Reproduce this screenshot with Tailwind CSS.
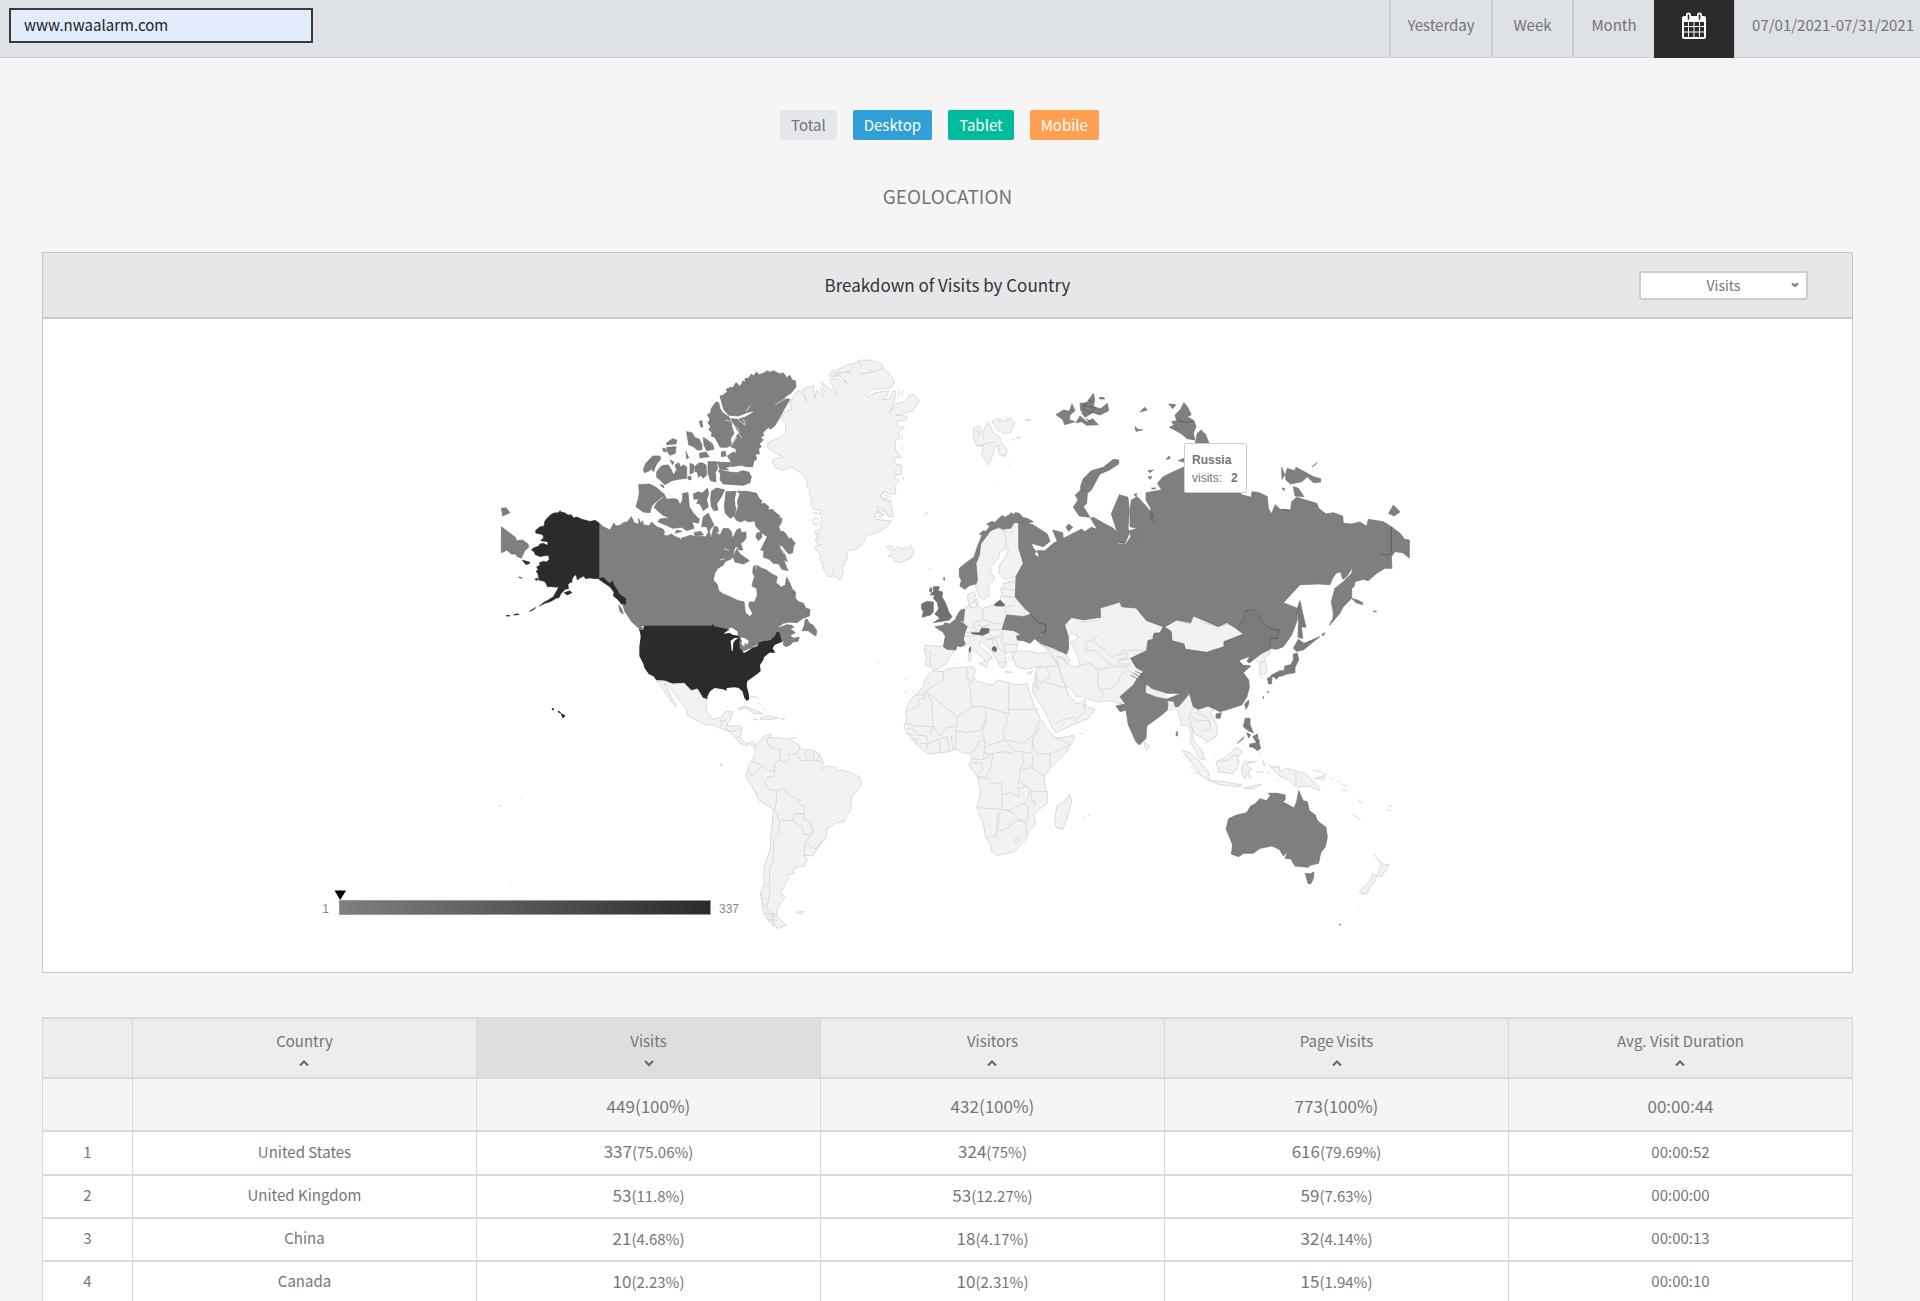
<!DOCTYPE html>
<html lang="en">
  <head>
    <meta charset="UTF-8" />
    <meta name="viewport" content="width=device-width, initial-scale=1.0" />
    <title>Geolocation - www.nwaalarm.com</title>
    <script src="https://cdn.jsdelivr.net/npm/@tailwindcss/browser@4"></script>
  </head>
  <body
    class="h-screen overflow-hidden bg-[#f5f5f5] font-['Noto_Sans_CJK_SC',sans-serif] text-[15px] text-[#757575]"
  >
    <!-- Top bar: site picker and date range -->
    <header
      class="flex h-[58px] items-stretch justify-between border-b border-[#cdd1d5] bg-[#dee1e6]"
    >
      <div class="pt-2 pl-[9px]">
        <label for="site" class="sr-only">Site</label>
        <input
          id="site"
          type="text"
          value="www.nwaalarm.com"
          class="block h-[35px] w-[304px] border-2 border-[#3a3a3a] bg-[#e3ecfd] px-[13px] pb-[3px] text-[15px] leading-[28px] text-[#222] outline-none"
        />
      </div>
      <nav class="flex leading-[49px]" aria-label="Date range">
        <button type="button" class="flex w-[102px] justify-center border-l-2 border-[#c8cbcf]">Yesterday</button>
        <button type="button" class="flex w-[81px] justify-center border-l-2 border-[#c8cbcf]">Week</button>
        <button type="button" class="flex w-[82px] justify-center border-l-2 border-[#c8cbcf]">Month</button>
        <button
          type="button"
          aria-label="Pick dates"
          class="-mb-px flex w-[80px] justify-center bg-[#2b2b2b] pt-3"
        >
          <svg class="h-[27px] w-6" viewBox="0 0 24 27" fill="none">
            <rect x="0" y="4" width="24" height="23" rx="2" fill="#fff" />
            <path d="M6.5 3v4M17.5 3v4" stroke="#fff" stroke-width="5" stroke-linecap="round" />
            <path d="M6.5 3v4M17.5 3v4" stroke="#2b2b2b" stroke-width="1.6" stroke-linecap="round" />
            <path
              d="M2 10h4v4H2zM7 10h4.500v4H7zM12.500 10H17v4h-4.500zM18 10h4v4h-4zM2 15h4v4.500H2zM7 15h4.500v4.500H7zM12.500 15H17v4.500h-4.500zM18 15h4v4.500h-4zM2 20.500h4V25H2zM7 20.500h4.500V25H7zM12.500 20.500H17V25h-4.500zM18 20.500h4V25h-4z"
              fill="#2b2b2b"
            />
          </svg>
        </button>
        <span class="flex w-[186px] justify-end border-l border-[#c8cbcf] pr-[6px]">07/01/2021-07/31/2021</span>
      </nav>
    </header>

    <main class="mr-[67px] ml-[42px]">
      <!-- Device filter -->
      <div class="flex justify-center pt-[52px] leading-[30px]">
        <button type="button" class="mr-4 rounded-[2px] bg-[#e4e7eb] px-[11px]">Total</button>
        <button type="button" class="mr-4 rounded-[2px] bg-[#2f9fd6] px-[11px] text-white">Desktop</button>
        <button type="button" class="mr-4 rounded-[2px] bg-[#00bc9c] px-[11px] text-white">Tablet</button>
        <button type="button" class="mr-4 rounded-[2px] bg-[#ffa050] px-[11px] text-white">Mobile</button>
      </div>

      <h1 class="my-10 text-center text-[19px] leading-[32px]">GEOLOCATION</h1>

      <!-- Map panel -->
      <section class="border border-[#c6c6cc] bg-white">
        <div
          class="grid h-[66px] grid-cols-3 items-center border-b-2 border-[#cbcbcf] bg-[#e7e7e9]"
        >
          <h2 class="col-start-2 text-center text-[17px] text-[#333]">Breakdown of Visits by Country</h2>
          <div class="relative mr-11 justify-self-end">
            <label for="metric" class="sr-only">Metric</label>
            <select
              id="metric"
              class="block h-[29px] w-[169px] appearance-none rounded-[3px] border-2 border-[#ccc] bg-white py-0 text-center text-[14px] leading-[25px] [text-align-last:center]"
            >
              <option>Visits</option>
              <option>Visitors</option>
              <option>Page Visits</option>
            </select>
            <svg class="pointer-events-none absolute top-[10px] right-[9px] h-2 w-2" viewBox="0 0 8 8" fill="none">
              <path d="M1 2.500 4 4.800 7 2.500" stroke="#888" stroke-width="2.600" />
            </svg>
          </div>
        </div>

        <svg
          class="block w-full font-['Liberation_Sans',sans-serif] text-[12px]"
          viewBox="43 319 1809 653"
          stroke-linejoin="round"
          role="img"
          aria-label="World map of visits"
        >
          <defs>
            <linearGradient id="scale">
              <stop offset="0" stop-color="#808080" />
              <stop offset="1" stop-color="#2b2b2b" />
            </linearGradient>
          </defs>

          <!-- Canada, Alaska -->
          <g transform="translate(490 350) scale(.33333)" stroke-width="2">
            <g fill="#7f7f7f" stroke="#707070">
              <path d="M327 519 340 530 360 540 372 520 378 528 390 526 400 518 412 516 424 500 430 512 434 520 446 522 446 506 452 520 458 512 460 524 478 528 484 516 500 530 520 538 524 548 520 554 530 558 545 552 552 558 570 566 576 580 574 564 590 560 600 556 622 560 640 558 645 562 655 548 658 540 662 566 668 545 672 530 682 530 686 545 676 545 690 556 700 535 716 536 724 545 728 566 740 540 750 535 755 548 768 545 768 565 760 575 752 580 758 600 748 600 738 588 732 600 730 620 722 628 706 634 700 645 684 655 674 670 670 690 682 704 686 722 700 732 720 740 745 752 762 755 766 788 780 800 788 790 776 768 778 756 794 756 802 735 800 715 786 708 790 690 794 680 788 668 790 650 800 645 815 655 826 658 846 672 862 680 858 698 874 712 886 705 890 682 900 700 906 716 916 726 916 745 926 755 940 760 948 775 960 778 958 798 940 805 920 818 900 816 880 820 862 832 870 832 890 824 905 826 912 832 900 836 916 848 900 856 910 865 928 862 924 874 908 876 902 884 888 890 880 884 882 872 874 876 866 850 860 846 850 862 846 868 812 872 800 890 760 910 740 880 668 828 450 828 462 838 450 838 425 815 415 800 405 785 400 770 398 762 386 745 372 726 350 700 327 686z" />
              <path d="M946 808 942 830 936 842 955 842 968 852 978 858 980 842 970 826 958 820 952 808z" />
              <path d="M740 424 770 424 800 430 806 444 816 452 812 462 824 460 836 470 834 480 846 478 862 492 870 498 866 506 876 504 874 518 866 530 872 545 880 544 888 552 896 566 904 564 910 574 916 580 910 590 908 608 896 612 884 598 876 586 870 590 884 612 892 636 880 628 894 662 876 658 866 642 850 640 838 628 820 622 822 602 812 600 828 568 832 560 820 552 798 530 794 512 776 516 765 510 752 516 738 510 734 500 745 470 742 455 750 430z" />
              <path d="M708 425 738 424 733 450 738 475 733 498 720 505 706 490 703 470z" />
              <path d="M740 596 750 612 778 632 760 642 735 636 730 622z" />
              <path d="M800 550 814 545 816 560 806 572 798 562z" />
              <path d="M664 424 680 414 704 420 694 440 680 462 684 480 672 482 664 470 662 448z" />
              <path d="M610 432 625 425 636 430 652 415 656 430 650 450 655 470 640 482 630 462 620 460 626 446 612 448z" />
              <path d="M640 500 655 490 662 505 672 525 655 545 650 530 635 530z" />
              <path d="M522 432 500 460 492 472 505 484 518 495 534 502 508 508 505 516 525 524 548 535 575 532 590 542 612 535 606 515 625 520 628 508 610 490 598 470 594 428 578 430 578 450 570 464 562 448 548 446 530 448z" />
              <path d="M446 404 478 402 498 412 522 432 505 452 485 468 480 488 460 486 438 470 444 450 448 430z" />
              <path d="M700 362 718 366 740 368 758 362 776 366 784 380 780 398 760 406 700 402 690 390 692 372 684 360z" />
              <path d="M614 350 625 340 636 338 648 345 650 375 640 385 632 376 626 382 622 366 615 365z" />
              <path d="M654 335 680 335 682 355 676 368 678 396 662 392 654 370z" />
              <path d="M500 366 512 350 520 346 535 345 544 360 550 375 560 360 555 345 566 338 572 352 580 345 590 350 590 385 566 388 545 392 525 404 508 388 500 382z" />
              <path d="M460 360 466 342 488 318 510 318 512 328 500 342 490 365 484 356 478 362 464 368z" />
              <path d="M530 278 548 266 560 270 558 282 530 284zM530 292 558 290 556 310 540 316 530 302zM518 294l8 2 2 10-8-2zM590 245 606 248 614 262 628 268 636 285 635 300 622 300 610 290 596 284zM640 262 655 272 668 282 672 298 650 302 642 285zM628 214 636 212 638 232 632 230z" />
              <path d="M588 304l8 20-6 2zM600 340 612 345 610 368 600 372zM594 380l8-2 2 10-8 2zM628 310l20-4 10 14-28 4zM694 306l12-2 2 14-14 2zM682 336 714 338 722 350 706 352 716 360 690 358zM540 330l12 6-4 8zM510 404l10 2 2 8zM612 548l20-4 8 10-24 4zM560 540l16 4-20 6z" />
              <path d="M664 175 678 156 686 158 690 176 700 190 718 202 724 215 726 232 732 250 722 266 724 284 712 292 692 292 680 272 674 262 664 258 666 248 656 238 662 230 654 218 660 208 652 195 662 188z" />
              <path d="M690 138 700 136 712 124 708 118 722 112 728 114 738 98 744 102 746 110 756 102 758 92 764 98 766 86 776 84 784 72 790 78 800 66 806 74 820 70 832 62 838 68 850 62 862 68 870 72 878 68 888 78 886 86 900 76 906 90 916 92 918 110 904 128 880 145 900 148 884 175 868 205 854 228 840 238 836 232 826 240 818 250 822 256 812 262 820 270 808 282 814 290 806 296 808 312 796 312 800 328 792 332 788 350 770 350 750 346 726 350 714 338 724 336 712 318 730 306 738 310 738 296 722 290 738 262 746 248 730 220 724 206 745 208 768 200 788 188 792 182 770 188 745 198 716 196 702 180 696 160z" />
              <path d="M386 765 394 775 400 792 390 785z" />
              <!-- eastern tip of Russia past the date line -->
              <path d="M34 530 76 562 80 572 98 570 114 582 116 592 104 602 94 625 82 620 76 612 64 612 50 600 42 605 34 608zM34 475 48 473 60 488 38 498z" />
              <path fill="none" d="M800 66l6 20M838 62l4 14M862 68l-8 16M888 78l-12 12M764 86l14 18M722 112l16 12M808 282l-18-6M818 250l-16 4M700 130l16 10M656 220l14-6M664 258l14-6M690 292l-4-16M862 492l-16 8M888 552l-18 2M836 470l-12 12M812 462l-18-4M916 726l-14 4M948 775l-18 2M700 600l14 6M372 520l2 14" />
              <!-- fjords -->
              <path fill="none" stroke="#fff" d="M896 140l-40 24M745 208l20 18M730 226l14 10 2 16 10 12M740 262l-16 24M782 166l-14 18M760 208l6 16M706 210l16 4M756 346l2 10M500 500l34 4M520 440l-30 24M690 630l14-4M702 596l16 6M868 586l14 26M740 440l-4 30M752 516l14 30M568 432l4 20M800 640l-2 18" />
            </g>
            <g fill="#2b2b2b" stroke="#2b2b2b" stroke-width="1.500">
              <path d="M327 519 316 511 300 514 276 508 262 501 250 503 244 494 234 495 224 488 214 486 210 482 204 488 192 489 182 494 172 504 164 514 162 528 150 530 136 542 138 550 146 551 154 553 160 557 160 564 152 572 170 575 174 577 172 586 160 580 150 582 146 588 130 594 124 600 132 605 136 614 150 620 160 618 174 616 176 620 178 627 170 636 160 634 148 638 150 646 140 650 144 660 138 664 144 672 146 690 162 694 168 700 172 710 186 710 198 712 206 710 200 722 190 740 178 748 160 758 148 768 166 760 184 754 200 744 206 744 214 730 226 718 236 716 234 704 242 696 246 698 246 690 250 680 258 674 262 690 270 684 282 678 286 686 300 684 312 686 327 686 340 682 350 692 358 700 368 694 372 706 382 720 386 730 396 738 408 746 406 764 398 760 394 764 390 756 384 750 378 744 370 738 372 726 362 712 350 704 338 696 327 688z" />
              <path d="M118 784 138 772 130 780zM48 796 58 796 60 798 52 799zM70 795 80 791 88 793 80 795zM96 630 118 636 120 640 108 644zM86 681 92 682 96 686zM134 688 142 684 142 692zM222 728 240 722 246 728 232 735z" />
            </g>
          </g>

          <!-- Americas south of Canada -->
          <g transform="translate(480 600) scale(.33333)" stroke-width="3">
            <path fill="#2b2b2b" d="M492 77 696 77 698 72 703 79 745 88 738 94 730 102 750 98 772 108 780 112 778 130 780 145 790 157 812 148 832 138 838 126 850 122 872 120 884 108 890 95 898 97 906 125 884 135 878 145 886 158 868 158 852 172 850 180 840 195 842 214 832 222 802 243 800 258 806 280 808 298 800 303 792 292 788 275 776 264 764 262 740 264 740 272 728 268 704 264 690 274 682 290 682 298 668 294 660 280 652 267 634 272 612 250 578 252 554 243 530 242 522 230 506 222 494 205 490 192 484 180 478 168 478 140 482 110 480 96 476 88 490 90z" />
            <path fill="#2b2b2b" stroke="#2b2b2b" d="M234 333 242 338 236 337zM243 341 255 347 248 354 246 346zM216 326 222 327 218 330z" />
            <path fill="#fff" d="M730 101 748 91 746 84 756 83 772 94 774 106 760 105 748 98zM755 152 752 122 764 114 776 114 766 120 760 128 758 153zM780 112 794 114 806 122 802 134 794 128 793 140 784 132 786 122zM788 155 812 145 808 150 792 159zM814 140 836 134 830 139z" />
            <g fill="#f2f2f2" stroke="#d9d9d9">
              <path d="M530 242 554 243 578 252 612 250 634 272 652 267 660 280 668 294 680 298 678 330 698 358 724 352 735 335 758 335 750 360 742 372 745 378 780 378 786 384 780 412 784 420 800 432 815 424 830 434 822 440 806 430 800 438 780 430 765 412 750 395 722 385 700 374 676 374 622 346 618 325 590 290 570 262 552 250 590 318 584 318 560 285 548 265z" />
              <path d="M772 328 795 318 830 332 848 342 820 340 800 325zM838 356 860 346 895 354 880 358 845 358zM820 357 834 359 824 360zM902 356 914 357 904 358z" />
              <path d="M830 434 850 410 874 402 870 415 885 412 935 420 950 430 965 448 1000 450 1020 465 1030 488 1024 508 1040 497 1068 503 1072 516 1080 510 1105 515 1140 532 1145 550 1136 568 1115 588 1112 628 1092 665 1070 668 1040 686 1040 712 1010 748 998 768 972 766 982 780 975 798 942 804 940 822 918 824 928 836 915 850 912 862 900 876 915 890 892 925 888 945 918 976 895 986 870 968 850 935 842 880 852 850 852 800 870 750 880 628 838 602 820 565 798 530 806 495 818 480 826 460 824 445z" />
              <path d="M948 936 972 935 962 944zM722 490 728 498 722 498z" />
              <g fill="none">
                <path d="M718 386 725 372 722 362 738 362M742 372 735 388 755 395 785 384M765 412 782 412M810 290l18 0 2 8M836 306l6 8M848 322l10 10M925 414l24 0M948 384l2 3M1190 186l6 0M55 618l12-3M120 594l4 1M91 852l1 3" />
                <path d="M874 402 860 420 868 440 900 450 900 480 885 490 884 515M900 480 915 488 930 478 925 465 950 460 962 482 1000 480 1025 485M950 430 960 440 955 460M985 452 972 462 982 476M1000 452 1002 478M1018 460 1012 480M815 483 845 495 840 506 815 528 806 512M845 495 865 512 884 512 882 528 862 532 854 548 866 568 888 572 890 600 885 628M888 572 915 565 920 580 955 598 958 614 972 618 972 640 944 642 938 662 908 660 900 668 885 628M944 642 972 642 975 660 988 662 1000 690 990 704 968 702 970 686 938 662M1002 692 975 730 1008 748M975 730 972 766M900 668 895 700 882 720 878 785 868 808 870 870 860 930 888 945M852 850 868 862M845 900 862 896M846 920 862 914M850 940 890 944M858 955 892 962M880 945 880 980M848 880l-8 4 10 10M852 908l-6 8 12 10M862 936l10 14 14 2M868 958l20 16M1008 748 1024 724" />
              </g>
            </g>
          </g>

          <!-- Greenland, Iceland, Svalbard -->
          <g transform="translate(760 350) scale(.33333)" fill="#f2f2f2" stroke="#d9d9d9" stroke-width="3">
            <path d="M106 128 122 122 142 156 128 118 160 106 164 146 170 120 192 142 180 112 196 128 184 96 232 136 208 88 232 86 262 100 240 78 205 78 215 65 240 56 262 44 285 40 295 31 330 30 365 42 370 56 388 72 404 95 396 110 380 116 340 117 318 136 322 142 345 128 386 122 380 140 366 150 388 148 398 124 406 124 404 156 386 192 410 160 436 155 450 134 464 134 478 152 458 182 430 190 408 196 440 198 440 210 412 212 412 230 434 232 416 246 418 266 406 268 405 300 415 310 425 322 400 325 408 342 424 346 426 372 402 378 418 392 404 408 408 430 390 434 372 424 360 438 378 448 392 460 400 500 384 500 376 480 350 470 362 488 345 492 348 508 385 512 396 512 380 532 346 550 320 556 310 580 290 596 265 602 260 616 262 630 252 634 254 646 246 650 250 664 246 680 238 690 230 680 220 678 205 680 198 668 190 656 188 640 180 630 182 616 174 605 164 595 174 584 166 570 172 556 164 545 186 535 178 524 188 510 180 496 184 480 160 478 150 458 156 446 148 436 150 420 140 408 142 396 126 370 92 350 68 362 46 352 36 330 70 320 40 308 22 290 24 278 60 262 78 246 76 218 62 206 78 180 94 180 90 160z" />
            <path d="M380 590 396 588 400 604 412 590 430 598 434 590 440 598 452 584 456 596 462 605 452 625 420 638 400 632 402 622 384 618 396 608z" />
            <path d="M642 232 660 228 668 250 682 216 694 235 700 250 720 262 722 275 742 300 735 320 716 312 715 285 704 290 700 312 686 345 664 312 672 288 650 288 640 260zM696 215 712 206 735 214 752 204 764 218 752 248 732 250 712 240 704 226zM794 212 804 206 812 210zM770 262 782 262 772 266z" />
            <path fill="none" d="M370 56 340 66 300 72M285 40 270 62 230 70M340 66 320 56M262 100 250 84M220 72 250 66 276 70M214 82 244 72M296 34 306 52M650 288 700 276M668 250 672 270M648 240l12 10-8 14M716 206l4 14M740 212l-2-12M416 140l2-20M426 136l4-16M428 256l-2 14M426 290l2 14M430 380l0 12M412 302l-10-4M410 360l-8 6 10 10M156 510l16-8 6 10-14 12zM158 488l20 2M158 520l16 8M164 555l20-6M164 570l20-10M168 590l18-8M376 450l-14-6M366 430l20 10-14 10 22 4M388 440l6 16M360 480l18 6M350 484l24 10M352 500l22-8M355 506l14-10M758 264l2 8M746 346l4-6M704 404l0 5M494 494l10-6M508 655l4 5M220 668l2-16M182 640l12-4" />
          </g>

          <!-- Europe, Middle East, Africa -->
          <g transform="translate(890 480) scale(.33333)" fill="#f2f2f2" stroke="#d9d9d9" stroke-width="3">
            <path d="M262 300 258 250 268 225 272 192 290 168 302 152 322 144 342 150 350 185 348 205 330 215 326 235 302 258 302 282 314 288 312 300 296 320 298 345 280 360 268 350 256 315z" />
            <path d="M342 150 364 160 372 128 386 128 386 158 390 200 400 250 378 290 345 298 328 282 328 258 350 225 356 210 345 205 350 185z" />
            <path d="M232 345 250 335 256 345 250 370 236 376zM252 360 264 358 262 378z" />
            <path d="M218 390 235 378 248 382 262 376 276 386 310 375 342 378 330 355 335 345 332 325 350 306 380 298 374 345 406 378 404 408 350 405 338 446 375 452 385 480 378 515 345 520 348 536 350 552 340 565 328 558 322 540 308 520 296 505 280 490 268 482 270 500 300 525 308 535 296 540 290 562 268 550 286 546 280 535 258 518 240 500 232 492 222 500 220 470 224 440 220 420z" />
            <path d="M105 496 160 500 196 510 180 528 168 552 150 562 135 572 124 560 106 556 110 530 104 515z" />
            <path d="M368 518 395 512 420 515 445 520 480 516 500 528 505 558 470 562 440 560 410 568 378 560 372 540z" />
            <path d="M450 492 480 508 525 520 540 540 530 560 500 545 482 518z" />
            <path d="M440 562 505 558 515 590 528 624 540 652 558 668 570 670 584 656 586 678 614 688 596 715 540 738 498 758 488 745 462 690 430 640 426 625 432 605 436 590z" />
            <path d="M524 432 540 414 570 415 578 425 630 420 626 410 634 384 690 366 700 384 736 378 768 420 815 434 800 455 772 485 768 508 724 535 735 560 760 585 730 620 700 640 696 672 660 662 622 665 596 658 580 648 562 652 545 628 530 620 515 590 505 555 500 528 520 532 530 552 552 560 570 560 564 530 550 500 538 488 560 478 566 468 545 462 534 472 522 440z" />
            <path d="M126 572 160 575 175 565 250 560 256 575 250 590 262 605 310 616 320 600 345 605 378 614 412 612 416 630 434 680 450 715 470 745 492 770 500 775 552 766 552 778 530 815 480 865 462 890 466 925 472 935 472 970 432 1000 436 1035 416 1050 410 1075 372 1116 320 1127 306 1115 302 1095 286 1068 280 1030 260 985 272 935 262 890 236 855 246 838 240 820 220 820 200 808 172 816 115 822 80 795 62 770 46 750 42 740 50 718 46 695 62 660 76 645 100 620 104 598z" />
            <path d="M538 942 545 965 530 1020 518 1048 498 1042 494 1015 502 975 522 965z" />
            <path d="M236 522 244 520 242 542 234 540zM345 574 366 577 346 577zM412 580 428 572 422 582z" />
            <g fill="none">
              <path d="M108 512 122 516 118 545 122 558M276 386 282 418 250 428 252 444 270 452M282 418 315 432 342 428M345 380 348 404M262 436 285 440 300 432M224 458 262 455M300 450 340 448 330 468 305 472 296 458M335 455 340 470 330 480M342 492 380 495M318 470 322 500 345 520M222 470 240 470 262 462 290 475 318 476M335 325 374 332M335 348 376 352M345 380 372 378M285 480 310 478 308 492M322 500 310 520M330 480 345 492 344 520M338 310 374 308M240 380 246 384M325 545 345 548M355 530 362 545M364 524 368 540" />
              <path d="M470 562 480 590 460 605 440 600M440 604 442 625 460 605 528 624M430 640 448 625M495 730 520 718 552 712 562 728M560 715 585 695 580 672M440 580 436 625M480 516 505 558M500 530 530 540" />
              <path d="M588 520 588 488 605 480 630 500 645 510 665 532 700 512 768 510M570 555 600 550 625 570 665 560 705 560 720 556M588 512 612 510 650 545 670 556M625 570 622 612 630 628 665 626 685 610 690 590 705 568M630 628 640 645 628 660M682 528 710 518 712 532 685 540 682 552 724 552M605 480 625 466M705 560 720 575 735 590M690 540 724 535M508 550 515 560" />
              <path d="M160 575 160 600 108 632 102 645 76 645M108 632 186 698 202 710 246 680 240 625 230 590 232 562M104 640 104 655 84 658 84 680 48 694M108 632 125 665 130 740 74 738 50 730M130 740 150 768 172 742 200 740 202 710M198 752 230 758 272 750 288 715 285 680 246 680M200 740 198 752 196 808M285 680 356 702 356 612M232 590 246 612 250 590M356 688 444 688M290 720 276 755 285 785 272 780 252 812 240 820M350 705 350 735 338 750 345 780 400 790 430 765 450 720M285 800 345 780 370 812 425 820 430 765M282 800 285 820 300 825 310 820 340 815 370 820M310 820 300 870 290 888 262 890M395 825 402 850 390 870 388 905 382 912M285 785 285 800 280 838 246 838M280 838 300 830M246 850 275 848 278 870 262 885M262 895 300 895 302 912 334 908 336 945 336 985M260 983 360 990 400 970M336 945 358 938 385 950 385 925 412 918 420 935 412 960 400 970M450 740 425 785 440 820 480 822 540 795 510 778 492 770M430 825 425 862 462 888M480 822 480 862M392 870 425 862M390 905 430 935 470 935M425 932 425 960 436 978 432 960M360 990 385 1018 412 1022 416 980 400 970M330 992 322 1055 345 1048 385 1020M322 1000 320 1070 290 1070M345 990 372 1000M385 1020 408 1030 408 1060 412 1055M372 1080 384 1072 390 1080 378 1090z" />
              <path d="M80 765 108 768 115 790 108 810M115 790 148 778 150 818M148 778 172 770 178 814M184 768 188 808M50 745 75 750 80 765M48 760 70 765M62 775 85 780 80 795M130 740 120 765M90 790 112 790M44 598l5 1M46 636l8-3M66 634l4 0M568 760l10 0M582 1010l4 4M596 1004l4 4M118 264l4 6M104 104l10-6M190 536l6 1" />
            </g>
          </g>

          <!-- Asia Pacific without visits -->
          <g transform="translate(1080 580) scale(.33333)" fill="#f2f2f2" stroke="#d9d9d9" stroke-width="3">
            <path d="M256 140 290 122 330 132 340 108 362 116 366 128 415 138 465 128 470 145 490 162 432 185 432 200 380 217 316 208 312 192 276 182 274 155z" />
            <path d="M525 235 570 206 568 222 552 235 562 270 555 282 540 285 538 250zM540 248 558 242" />
            <path d="M290 385 318 350 326 332 330 345 340 380 355 384 385 378 402 390 392 400 412 440 410 468 380 488 370 475 350 465 338 450 342 485 365 510 376 540 358 535 345 510 330 485 334 460 325 435 305 437 298 410z" />
            <path d="M306 512 330 518 360 545 388 580 388 600 360 585 335 550zM382 600 430 605 485 615 480 620 420 614zM490 625 545 612 520 626z" />
            <path d="M408 545 440 530 468 502 488 515 474 530 476 555 460 582 415 575zM485 560 495 545 530 545 500 552 515 570 505 572 512 595 498 580 495 598 485 580z" />
            <path d="M572 562 598 560 600 575 620 565 680 582 695 600 720 625 718 632 685 618 650 622 630 602 600 588zM705 595 730 588 738 578 730 598z" />
            <path d="M882 824 900 842 908 852 926 854 918 870 905 890 892 888 898 870 905 858 895 840zM878 882 890 885 885 905 870 922 860 942 838 938 850 920 870 905z" />
            <path d="M193 485 209 498 201 510 194 500z" />
            <path fill="none" d="M330 400 345 420 388 422 392 445 365 455M340 380 328 410 338 450M355 388 350 400 380 410 392 440M412 545 445 540 460 525 474 528M648 572 648 620M748 592l12 8M770 602l10 6M785 612l16 8M785 630l18 2M836 658l10 14M818 705l24 14M918 688l16 4M925 680l12-4M530 575l22 2M548 540l4 18 6-10M560 580l12-4M590 602l8-8M700 570l30 8M310 530l6 6M330 560l8 8M344 575l6 6M400 574l4 2M403 522l2 4M542 516l0 6M564 556l20 4M832 988l4-2M12 712l4 2M26 706l4-2M845 945l6-2M540 292l6 0" />
          </g>

          <!-- Countries with visits: Europe, India -->
          <g transform="translate(890 480) scale(.33333)" fill="#7f7f7f" stroke="#707070" stroke-width="2">
            <path d="M208 265 234 244 252 232 262 200 276 165 268 162 280 152 288 154 300 138 290 132 306 124 314 128 330 112 338 106 344 112 358 104 364 98 370 104 376 98 388 100 398 112 414 116 430 125 400 132 386 128 372 128 362 145 340 148 326 142 302 152 290 168 272 192 268 225 258 250 262 300 258 312 240 316 224 328 210 318 214 300 208 290z" />
            <path fill="#707070" d="M130 320 148 320 144 332 158 336 156 350 168 372 176 395 186 410 178 420 130 428 150 415 134 402 146 388 142 368 130 355 134 345 120 345 130 335zM118 334 122 322 126 326 124 338zM160 294 164 292 163 302zM95 372 110 364 130 366 130 395 122 405 96 412 100 395 94 385z" />
            <path d="M197 415 205 400 212 390 224 388 222 410 220 424 200 418z" />
            <path d="M135 440 160 436 165 428 178 432 200 416 218 428 232 440 224 458 220 480 226 492 215 500 200 498 198 510 170 508 160 500 166 468 158 455 145 448z" />
            <path fill="#6c6c6c" d="M245 458 268 458 275 444 298 446 296 458 278 466 245 461zM306 505 312 498 320 505 318 515 308 512zM312 374 330 360 344 374 342 378 318 378zM237 505 242 501 242 515 238 518z" />
            <path d="M350 405 400 410 422 402 440 425 468 434 466 455 448 462 450 470 434 476 420 490 400 482 382 480 380 468 392 464 372 452 336 448 342 430z" />
            <path d="M742 595 752 585 768 590 768 622 768 640 830 657 850 650 890 632 895 645 865 680 850 680 835 665 832 690 815 705 770 738 768 775 748 795 738 785 715 735 708 690 690 695 678 678 706 672 690 650 730 615zM858 760 862 754 862 768 859 768z" />
            <path fill="#f2f2f2" stroke="#d9d9d9" d="M768 622 800 632 828 643 828 655 800 650 768 637zM834 664 850 666 856 688 838 692z" />
            <path fill="none" stroke="#606060" d="M722 586l24 12M728 578l28 16M736 574l28 12M858 640l8-4M870 638l8-6M880 636l8-6" />
          </g>

          <!-- Russia -->
          <g transform="translate(1050 380) scale(.33333)" fill="#7f7f7f" stroke="#707070" stroke-width="2">
            <path d="M-94 428-80 425-50 435-8 462 0 484-20 500-56 490-50 505-40 515-48 522-32 534-38 512-15 512 10 490 22 484 8 450 38 458 40 475 60 465 95 447 104 455 124 442 142 448 122 415 130 412 165 432 190 445 202 458 184 402 208 344 234 352 238 390 234 445 240 456 225 490 202 486 206 492 228 492 242 470 240 452 262 445 240 440 240 390 244 360 262 350 285 375 302 395 302 385 288 360 288 338 335 330 322 310 340 290 370 275 400 262 430 240 480 300 560 330 578 345 604 352 606 335 628 338 652 350 655 385 664 402 676 374 690 388 722 390 725 365 740 352 800 370 806 385 828 402 850 398 878 408 880 430 905 432 930 426 950 440 955 418 1000 425 1024 440 1050 460 1064 478 1078 480 1078 534 1058 518 1035 515 1024 530 1026 565 1005 565 980 580 955 602 940 598 915 605 912 620 905 625 905 655 880 680 868 702 848 725 850 700 844 665 855 625 880 605 905 580 908 562 890 590 878 598 872 575 858 580 845 600 840 614 805 612 750 614 700 668 740 684 742 720 725 765 700 800 680 808 660 805 550 740 530 728 505 740 470 725 447 715 430 708 422 728 380 720 345 740 334 738 290 722 258 684 215 680 210 666 150 684 152 712 100 720 65 712 44 735 55 770 56 805 50 822 10 805-30 790-46 776-14 755-12 734-40 725-58 702-76 685-104 652-102 590-80 550-94 505z" />
            <path d="M18 104 40 90 58 94 66 72 75 92 60 105 58 120 75 125 44 134 38 118zM90 70 110 68 130 40 134 60 130 80 152 86 172 70 176 92 150 105 128 98 105 112 92 90zM78 128 90 108 110 125 128 116 145 134 110 136 95 125zM148 52 162 53 164 57 150 57zM270 96 284 82 292 90zM255 140 264 148 278 150 258 154z" />
            <path d="M356 72 378 74 368 86zM402 68 412 80 424 104 412 110 432 122 438 140 430 160 435 180 412 176 392 160 378 152 358 142 372 135 365 125 380 122 375 105 390 90zM442 160 454 150 460 158 466 162 478 192 436 190zM348 238 358 228 360 236zM294 272 310 270 300 278zM294 290 306 290 300 298zM304 324 318 324 310 328zM385 242 404 234 402 246zM252 344 260 340 258 350z" />
            <path d="M124 272 160 262 190 238 206 240 206 252 178 270 150 282 140 300 124 330 112 340 110 370 100 380 120 412 88 408 70 382 84 360 76 345 92 330 92 318 100 296zM48 442 56 432 68 442 56 454z" />
            <path d="M695 262 704 284 696 298zM706 285 712 265 734 272 738 262 772 280 790 290 812 296 812 306 790 308 772 290 755 305 722 312 708 300zM786 260 802 248 790 258zM730 320 745 325 762 350 735 348zM696 324 704 326 702 332zM1016 400 1030 375 1050 396 1032 408zM905 655 922 660 938 668 938 674 918 668zM970 693 980 694 972 696zM838 736 846 720 850 722 842 732zM815 765 822 760 820 766z" />
            <path fill="none" stroke="#5c5c5c" stroke-width="3" d="M1024 440V520M992 524H1024M565 740 585 715 588 692 612 690 625 705 636 728 660 745 688 750 682 775 662 775 660 805M98 78 110 70M110 70 100 88 122 100 135 82 112 80M95 100 108 106M115 60 128 66M108 116 126 128M385 122 410 128 430 122M302 395 304 420 314 428M308 400 310 418M208 488 222 488M695 388 720 392M-58 702-40 725-12 734-14 755-32 762" />
            <path fill="none" d="M262 445 270 470 284 480M250 385l18 12M930 430l24 10M100 296l18 10M92 330l20 4" />
          </g>

          <!-- China, Japan, Philippines, Australia -->
          <g transform="translate(1080 580) scale(.33333)" fill="#7b7b7b" stroke="#6b6b6b" stroke-width="2">
            <path d="M250 138 274 155 276 182 312 192 316 208 380 217 432 200 432 185 490 162 468 145 486 130 496 95 516 88 538 100 546 128 572 146 598 152 590 172 572 172 570 208 545 220 524 236 505 252 484 250 508 232 480 240 490 255 512 258 490 278 506 300 508 322 500 352 485 375 445 388 420 395 385 378 355 388 340 380 330 345 320 330 300 340 262 340 215 325 190 305 180 285 190 275 168 262 152 235 200 212 204 182 218 178 222 160 240 158zM408 402 424 398 420 415 408 414zM494 372 506 360 506 372 498 388z" />
            <path fill="#fff" stroke="none" d="M478 242 508 230 500 244 512 254 490 254z" />
            <path d="M640 205 655 178 672 190 720 170 700 185 670 210 650 214zM640 222 652 220 656 240 645 262 645 278 620 282 605 288 580 290 566 296 575 285 600 272 612 272 615 258 632 254 640 240zM562 294 576 296 574 312 566 312zM582 290 596 288 590 298zM660 62 668 100 678 142 664 140 668 175 654 172 656 120 650 90zM728 162 734 158 730 166zM562 336 566 334 564 339zM548 354 551 349 550 356z" />
            <path d="M496 415 510 415 510 435 520 458 505 452 490 440zM518 470 532 462 534 478 540 482 530 488zM500 458 512 464 506 474zM510 492 524 490 536 484 542 505 532 512 520 502 508 500zM472 490 492 470 488 478z" />
            <path fill="#7f7f7f" d="M656 632 664 650 670 662 682 665 688 692 706 705 712 722 722 730 738 742 742 772 736 800 722 818 716 850 690 856 685 862 645 858 632 836 615 835 624 812 610 828 598 808 575 798 540 805 520 820 490 820 476 830 454 822 458 795 444 760 438 748 446 716 468 706 500 698 512 678 525 672 540 656 560 662 572 645 564 640 590 640 616 645 615 660 608 665 642 684 650 665zM676 880 690 882 702 876 700 895 692 912 684 910z" />
            <path d="M778 1033 782 1033 781 1036z" />
          </g>

          <!-- Colour scale -->
          <path d="M334.500 890.500H346L340.200 900z" />
          <rect x="339.500" y="900.500" width="371" height="14" fill="url(#scale)" stroke="#999" />
          <text x="329" y="913" text-anchor="end" fill="#888">1</text>
          <text x="719" y="913" fill="#888">337</text>

          <!-- Tooltip -->
          <rect x="1184.500" y="443.500" width="62" height="49" rx="1" fill="#fff" stroke="#ccc" />
          <text x="1192" y="464" font-weight="bold" fill="#757575">Russia</text>
          <text x="1192" y="482" fill="#757575">visits:</text>
          <text x="1231" y="482" font-weight="bold" fill="#757575">2</text>
        </svg>
      </section>

      <!-- Visits per country -->
      <table class="mt-11 w-full table-fixed border-collapse border border-[#d6d6d6] bg-white text-center leading-[22px]">
        <colgroup>
          <col class="w-[90px]" />
          <col />
          <col />
          <col />
          <col />
          <col />
        </colgroup>
        <thead class="bg-[#ededed]">
          <tr class="h-[60px] border-y-2 border-[#dadada]">
            <th class="border-x border-[#d6d6d6]"></th>
            <th class="border-x border-[#d6d6d6] font-normal">
              <button type="button" class="inline-flex flex-col items-center gap-[7px]">
                Country
                <svg class="h-2 w-[10px]" viewBox="0 0 10 8" fill="none"><path d="M1 6.500 5 2.500l4 4" stroke="#666" stroke-width="2" /></svg>
              </button>
            </th>
            <th class="border-x border-[#d6d6d6] bg-[#dedede] font-normal">
              <button type="button" class="inline-flex flex-col items-center gap-[7px]">
                Visits
                <svg class="h-2 w-[10px]" viewBox="0 0 10 8" fill="none"><path d="M1 2l4 4 4-4" stroke="#666" stroke-width="2" /></svg>
              </button>
            </th>
            <th class="border-x border-[#d6d6d6] font-normal">
              <button type="button" class="inline-flex flex-col items-center gap-[7px]">
                Visitors
                <svg class="h-2 w-[10px]" viewBox="0 0 10 8" fill="none"><path d="M1 6.500 5 2.500l4 4" stroke="#666" stroke-width="2" /></svg>
              </button>
            </th>
            <th class="border-x border-[#d6d6d6] font-normal">
              <button type="button" class="inline-flex flex-col items-center gap-[7px]">
                Page Visits
                <svg class="h-2 w-[10px]" viewBox="0 0 10 8" fill="none"><path d="M1 6.500 5 2.500l4 4" stroke="#666" stroke-width="2" /></svg>
              </button>
            </th>
            <th class="border-x border-[#d6d6d6] font-normal">
              <button type="button" class="inline-flex flex-col items-center gap-[7px]">
                Avg. Visit Duration
                <svg class="h-2 w-[10px]" viewBox="0 0 10 8" fill="none"><path d="M1 6.500 5 2.500l4 4" stroke="#666" stroke-width="2" /></svg>
              </button>
            </th>
          </tr>
        </thead>
        <tbody class="[&_td]:border-x [&_td]:border-[#d6d6d6]">
          <tr class="h-[53px] border-b-2 border-[#dadada] bg-[#f5f5f5] text-[17px]">
            <td></td>
            <td></td>
            <td class="pt-[2px]">449(100%)</td>
            <td class="pt-[2px]">432(100%)</td>
            <td class="pt-[2px]">773(100%)</td>
            <td class="pt-[2px]">00:00:44</td>
          </tr>
          <tr class="h-11 border-b-2 border-[#dadada] [&_td]:pb-[3px]">
            <td>1</td>
            <td>United States</td>
            <td><span class="text-[17px]">337</span>(75.06%)</td>
            <td><span class="text-[17px]">324</span>(75%)</td>
            <td><span class="text-[17px]">616</span>(79.69%)</td>
            <td>00:00:52</td>
          </tr>
          <tr class="h-[43px] border-b-2 border-[#dadada] [&_td]:pb-[3px]">
            <td>2</td>
            <td>United Kingdom</td>
            <td><span class="text-[17px]">53</span>(11.8%)</td>
            <td><span class="text-[17px]">53</span>(12.27%)</td>
            <td><span class="text-[17px]">59</span>(7.63%)</td>
            <td>00:00:00</td>
          </tr>
          <tr class="h-[43px] border-b-2 border-[#dadada] [&_td]:pb-[3px]">
            <td>3</td>
            <td>China</td>
            <td><span class="text-[17px]">21</span>(4.68%)</td>
            <td><span class="text-[17px]">18</span>(4.17%)</td>
            <td><span class="text-[17px]">32</span>(4.14%)</td>
            <td>00:00:13</td>
          </tr>
          <tr class="h-[43px] border-b-2 border-[#dadada] [&_td]:pb-[3px]">
            <td>4</td>
            <td>Canada</td>
            <td><span class="text-[17px]">10</span>(2.23%)</td>
            <td><span class="text-[17px]">10</span>(2.31%)</td>
            <td><span class="text-[17px]">15</span>(1.94%)</td>
            <td>00:00:10</td>
          </tr>
        </tbody>
      </table>
    </main>
  </body>
</html>
